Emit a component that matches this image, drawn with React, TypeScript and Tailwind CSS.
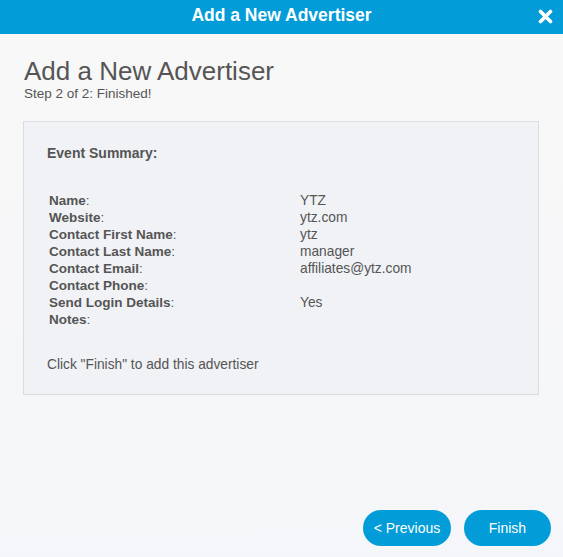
import React from "react";

const rows: [string, string][] = [
  ["Name", "YTZ"],
  ["Website", "ytz.com"],
  ["Contact First Name", "ytz"],
  ["Contact Last Name", "manager"],
  ["Contact Email", "affiliates@ytz.com"],
  ["Contact Phone", ""],
  ["Send Login Details", "Yes"],
  ["Notes", ""],
];

export default function App() {
  return (
    <div
      className="w-[563px] h-[557px] flex flex-col bg-gradient-to-b from-[#f8f8f8] to-[#f5f6f9] text-[#555555]"
      style={{ fontFamily: '"Liberation Sans", Arial, sans-serif' }}
    >
      <div className="h-[34px] shrink-0 bg-[#029cd8] flex items-center justify-center relative">
        <span className="text-white font-bold text-[17.5px] leading-none -mt-[2px]">Add a New Advertiser</span>
        <svg
          className="absolute right-[10px] top-[9px]"
          width="15"
          height="15"
          viewBox="0 0 15 15"
        >
          <path d="M2.5 2.5 L12.5 12.5 M12.5 2.5 L2.5 12.5" stroke="white" strokeWidth="3.6" strokeLinecap="round" />
        </svg>
      </div>
      <div className="flex-1 flex flex-col px-[23px]">
        <h1 className="mt-[22px] ml-[1px] text-[26px] leading-[30px] font-normal text-[#555555]">
          Add a New Advertiser
        </h1>
        <div className="ml-[1px] text-[13.5px] leading-[16px] text-[#555555]">Step 2 of 2: Finished!</div>
        <div className="mt-[19px] h-[274px] w-[516px] border border-[#dcdde1] bg-[#f0f2f6] flex flex-col pl-[23px] pt-[23px]">
          <div className="text-[14px] leading-[16px] font-bold text-[#555555]">Event Summary:</div>
          <div className="mt-[31px] ml-[2px] flex flex-col">
            {rows.map(([k, v]) => (
              <div key={k} className="flex text-[13.75px] leading-[17px]">
                <div className="w-[251px] shrink-0 text-[13.5px]">
                  <span className="font-bold">{k}</span>:
                </div>
                <div>{v}</div>
              </div>
            ))}
          </div>
          <div className="mt-[28px] text-[13.75px] leading-[17px]">Click "Finish" to add this advertiser</div>
        </div>
        <div className="mt-auto mb-[11px] flex justify-end gap-[13px] -mr-[11px]">
          <button className="w-[88px] h-[36px] rounded-full bg-[#029cd8] text-white text-[14px]">
            &lt; Previous
          </button>
          <button className="w-[87px] h-[36px] rounded-full bg-[#029cd8] text-white text-[14px]">
            Finish
          </button>
        </div>
      </div>
    </div>
  );
}
